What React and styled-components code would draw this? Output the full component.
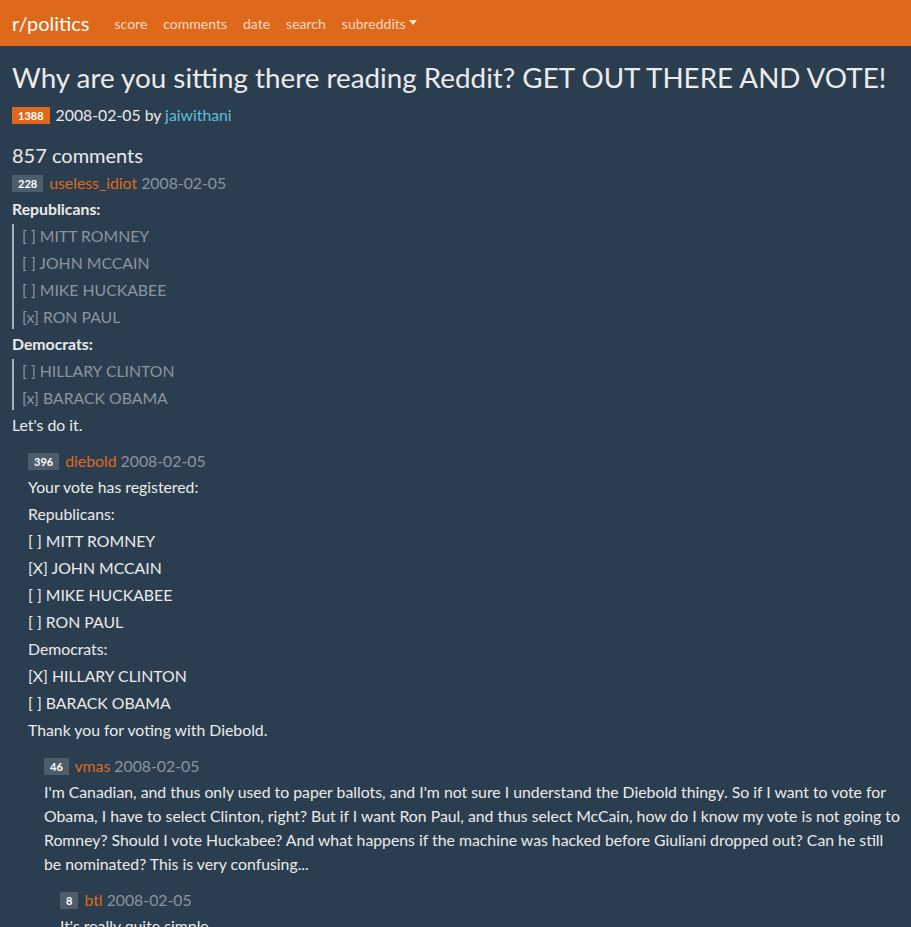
import styled, { createGlobalStyle } from "styled-components";

const GlobalStyle = createGlobalStyle`
  body {
    margin: 0;
    background: #2b3e50;
    color: #ebebeb;
    font-family: Lato, "Open Sans", sans-serif;
    font-size: 15.8px;
  }
`;

const App = () => {
  return (
    <>
      <GlobalStyle />
      <Navbar>
        <Brand>r/politics</Brand>
        <NavLink>score</NavLink>
        <NavLink>comments</NavLink>
        <NavLink>date</NavLink>
        <NavLink>search</NavLink>
        <NavLink>
          subreddits<Caret />
        </NavLink>
      </Navbar>
      <Container>
        <Title>Why are you sitting there reading Reddit? GET OUT THERE AND VOTE!</Title>
        <Meta>
          <Badge $orange>1388</Badge> 2008-02-05 by <Author>jaiwithani</Author>
        </Meta>
        <CommentCount>857 comments</CommentCount>

        <Comment>
          <CommentHead>
            <Badge>228</Badge> <User>useless_idiot</User> <Muted>2008-02-05</Muted>
          </CommentHead>
          <Line>
            <strong>Republicans:</strong>
          </Line>
          <Quote>
            <Line>[ ] MITT ROMNEY</Line>
            <Line>[ ] JOHN MCCAIN</Line>
            <Line>[ ] MIKE HUCKABEE</Line>
            <Line>[x] RON PAUL</Line>
          </Quote>
          <Line>
            <strong>Democrats:</strong>
          </Line>
          <Quote>
            <Line>[ ] HILLARY CLINTON</Line>
            <Line>[x] BARACK OBAMA</Line>
          </Quote>
          <Line>Let's do it.</Line>

          <Comment $nested>
            <CommentHead>
              <Badge>396</Badge> <User>diebold</User> <Muted>2008-02-05</Muted>
            </CommentHead>
            <Line>Your vote has registered:</Line>
            <Line>Republicans:</Line>
            <Line>[ ] MITT ROMNEY</Line>
            <Line>[X] JOHN MCCAIN</Line>
            <Line>[ ] MIKE HUCKABEE</Line>
            <Line>[ ] RON PAUL</Line>
            <Line>Democrats:</Line>
            <Line>[X] HILLARY CLINTON</Line>
            <Line>[ ] BARACK OBAMA</Line>
            <Line>Thank you for voting with Diebold.</Line>

            <Comment $nested>
              <CommentHead>
                <Badge>46</Badge> <User>vmas</User> <Muted>2008-02-05</Muted>
              </CommentHead>
              <Line>
                I'm Canadian, and thus only used to paper ballots, and I'm not sure I
                understand the Diebold thingy. So if I want to vote for Obama, I have to
                select Clinton, right? But if I want Ron Paul, and thus select McCain, how
                do I know my vote is not going to Romney? Should I vote Huckabee? And what
                happens if the machine was hacked before Giuliani dropped out? Can he still
                be nominated? This is very confusing...
              </Line>

              <Comment $nested>
                <CommentHead>
                  <Badge>8</Badge> <User>btl</User> <Muted>2008-02-05</Muted>
                </CommentHead>
                <Line>It's really quite simple.</Line>
              </Comment>
            </Comment>
          </Comment>
        </Comment>
      </Container>
    </>
  );
};

export default App;

const Navbar = styled.nav`
  display: flex;
  align-items: center;
  height: 46px;
  padding: 0 12px;
  background: #df691a;
`;

const Brand = styled.span`
  color: #fff;
  font-size: 20px;
  margin-right: 17px;
`;

const NavLink = styled.span`
  display: inline-flex;
  align-items: center;
  color: rgba(255, 255, 255, 0.75);
  font-size: 14px;
  padding: 0 8px;
`;

const Caret = styled.span`
  display: inline-block;
  margin-left: 3px;
  margin-top: -2px;
  border-top: 5px solid rgba(255, 255, 255, 0.85);
  border-left: 4px solid transparent;
  border-right: 4px solid transparent;
`;

const Container = styled.div`
  padding: 15px 8px 0 12px;
`;

const Title = styled.h1`
  margin: 0 0 8px;
  font-size: 27.8px;
  font-weight: 400;
  line-height: 34px;
  color: #ebebeb;
`;

const Meta = styled.div`
  line-height: 24px;
  margin-bottom: 16px;
`;

const Badge = styled.span`
  display: inline-block;
  padding: 2px 6px;
  margin-right: 2px;
  font-size: 11px;
  font-weight: 700;
  line-height: 13px;
  color: #fff;
  background: ${(p) => (p.$orange ? "#df691a" : "#4e5d6c")};
  vertical-align: 1px;
`;

const Author = styled.span`
  color: #5bc0de;
`;

const CommentCount = styled.h4`
  margin: 0 0 4px;
  font-size: 20px;
  font-weight: 400;
  line-height: 24px;
`;

const Comment = styled.div`
  padding-left: ${(p) => (p.$nested ? "16px" : "0")};
  margin-top: ${(p) => (p.$nested ? "12px" : "0")};
`;

const CommentHead = styled.div`
  line-height: 24px;
  margin-bottom: 2px;
`;

const User = styled.span`
  color: #df691a;
`;

const Muted = styled.span`
  color: #8a959f;
`;

const Line = styled.p`
  margin: 0 0 3px;
  line-height: 24px;
`;

const Quote = styled.blockquote`
  margin: 0 0 3px;
  padding-left: 8px;
  border-left: 2px solid #a9b2bb;
  color: #8a959f;
  p:last-child {
    margin-bottom: 0;
  }
`;
